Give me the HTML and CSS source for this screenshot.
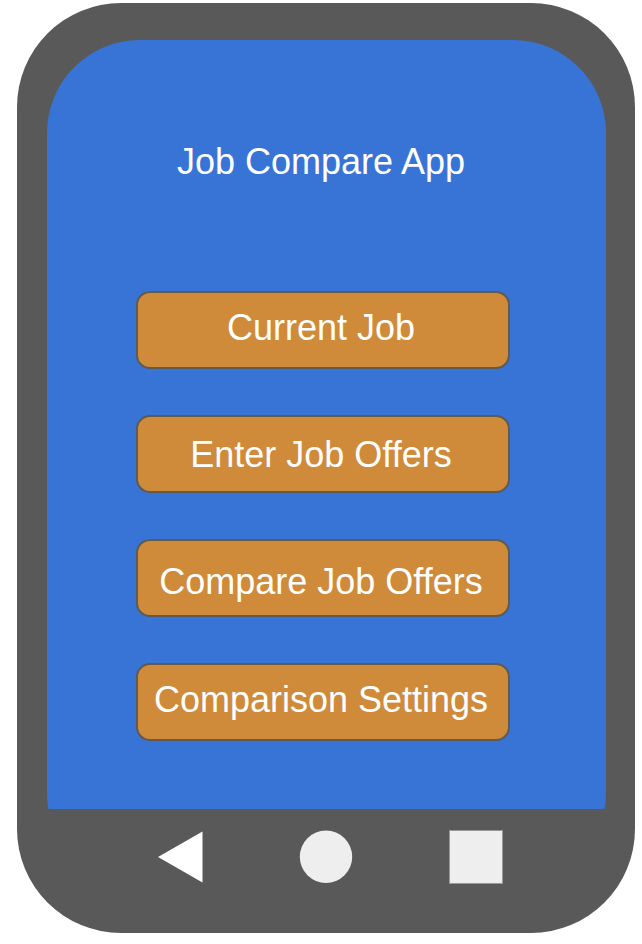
FILE: index.html
```html
<!DOCTYPE html>
<html lang="en">
<head>
  <meta charset="utf-8">
  <meta name="viewport" content="width=device-width, initial-scale=1">
  <title>Job Compare App</title>
  <link rel="stylesheet" href="styles.css">
</head>
<body>
  <div class="phone">
    <main class="screen">
      <h1 class="title">Job Compare App</h1>
      <div class="menu">
        <button class="menu-button menu-button--high" type="button">Current Job</button>
        <button class="menu-button" type="button">Enter Job Offers</button>
        <button class="menu-button menu-button--low" type="button">Compare Job Offers</button>
        <button class="menu-button menu-button--high" type="button">Comparison Settings</button>
      </div>
    </main>
    <nav class="navbar" aria-label="System">
      <button class="nav-button" type="button" aria-label="Back">
        <svg class="nav-icon" viewBox="0 0 54 54"><path d="M5 27 49.500 1.500V52.500Z" fill="#fff"/></svg>
      </button>
      <button class="nav-button" type="button" aria-label="Home">
        <svg class="nav-icon" viewBox="0 0 54 54"><circle cx="25" cy="26.700" r="26.200" fill="#eee"/></svg>
      </button>
      <button class="nav-button" type="button" aria-label="Recent apps">
        <svg class="nav-icon" viewBox="0 0 54 54"><rect x=".5" y=".5" width="53" height="53" fill="#eee" stroke="#999"/></svg>
      </button>
    </nav>
  </div>
</body>
</html>
```

FILE: styles.css
```css
* {
  box-sizing: border-box;
}

body {
  margin: 0;
  background: #fff;
  font-family: "Liberation Sans", Arial, sans-serif;
}

.phone {
  margin: 3px 7px 11px 17px;
  padding: 37px 29px 0 30px;
  border-radius: 104px;
  background: #595959;
}

.screen {
  padding: 101px 96px 68px 89px;
  border-radius: 93px 93px 2px 2px / 93px 93px 19px 19px;
  background: #3874d6;
  color: #fff;
}

.title {
  margin: 0 0 108px;
  padding-right: 4px;
  font-size: 36px;
  font-weight: 400;
  line-height: 42px;
  text-align: center;
  white-space: nowrap;
}

.menu {
  display: grid;
  gap: 46px;
}

.menu-button {
  height: 78px;
  padding: 2px 4px 0 0;
  border: 2px solid #5f5a52;
  border-radius: 14px;
  background: #cf8a3a;
  color: #fff;
  font-family: inherit;
  font-size: 36px;
  line-height: 42px;
  white-space: nowrap;
}

.menu-button--high {
  padding-top: 0;
  padding-bottom: 4px;
}

.menu-button--low {
  padding-top: 8px;
}

.navbar {
  display: flex;
  justify-content: space-between;
  padding: 21px 103px 49px 106px;
}

.nav-button {
  padding: 0;
  border: 0;
  background: none;
}

.nav-icon {
  display: block;
  width: 54px;
  height: 54px;
  overflow: visible;
}
```
